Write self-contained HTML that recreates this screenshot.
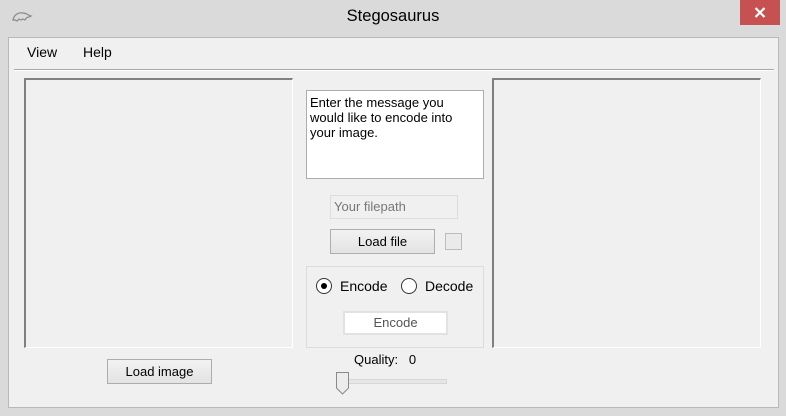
<!DOCTYPE html>
<html><head><style>
*{margin:0;padding:0;box-sizing:border-box}
body{width:786px;height:416px;background:#dadada;position:relative;overflow:hidden;font-family:"Liberation Sans",sans-serif;font-size:13px;color:#000}
.a{position:absolute}
.client{left:8px;top:37px;width:771px;height:371px;background:#f0f0f0;border:1px solid #b9b9b9}
.panel{background:#f0f0f0;border-top:2px solid #808080;border-left:2px solid #808080;border-right:1px solid #fff;border-bottom:1px solid #fff}
.btn{background:linear-gradient(#f2f2f2,#e3e3e3);border:1px solid #adadad;text-align:center;font-size:13px}
</style></head><body>
<svg class="a" style="left:11px;top:9px" width="22" height="14" viewBox="0 0 22 14"><path d="M2 11 C3 6 7 3 12 4 C15 4 17 6 20 7 L18 8 C16 8 15 9 14 11 L12 10 L10 11 L8 10 L6 12 L4 11 Z" fill="none" stroke="#888" stroke-width="1.2"/></svg>
<div class="a" style="left:0;width:786px;top:7px;text-align:center;font-size:16.5px;color:#000">Stegosaurus</div>
<div class="a" style="left:740px;top:0;width:40px;height:25px;background:#c75050"></div>
<svg class="a" style="left:754px;top:7px" width="12" height="11" viewBox="0 0 12 11"><path d="M1.5 1 L10.5 10 M10.5 1 L1.5 10" stroke="#fff" stroke-width="2.2"/></svg>
<div class="a client"></div>
<div class="a" style="left:27px;top:44px;font-size:14px">View</div>
<div class="a" style="left:83px;top:44px;font-size:14px">Help</div>
<div class="a" style="left:14px;top:69px;width:760px;height:2px;border-top:1px solid #a8a8a8;border-bottom:1px solid #fff"></div>
<div class="a panel" style="left:24px;top:78px;width:269px;height:270px"></div>
<div class="a panel" style="left:492px;top:78px;width:269px;height:270px"></div>
<div class="a" style="left:306px;top:90px;width:178px;height:89px;background:#fff;border:1px solid #adadad;padding:4px 3px;font-size:13px;line-height:15px">Enter the message you would like to encode into your image.</div>
<div class="a" style="left:330px;top:195px;width:128px;height:24px;border:1px solid #ddd;background:#f0f0f0;color:#777;padding:3px 3px;font-size:13px">Your filepath</div>
<div class="a btn" style="left:330px;top:229px;width:105px;height:25px;line-height:23px">Load file</div>
<div class="a" style="left:445px;top:233px;width:17px;height:17px;border:1px solid #bbb;background:#eaeaea"></div>
<div class="a" style="left:306px;top:266px;width:178px;height:82px;border:1px solid #dcdcdc"></div>
<div class="a" style="left:316px;top:278px;width:16px;height:16px;border-radius:50%;border:1px solid #333;background:#fff"></div>
<div class="a" style="left:321px;top:283px;width:6px;height:6px;border-radius:50%;background:#000"></div>
<div class="a" style="left:340px;top:278px;font-size:14px">Encode</div>
<div class="a" style="left:401px;top:278px;width:16px;height:16px;border-radius:50%;border:1px solid #333;background:#fff"></div>
<div class="a" style="left:425px;top:278px;font-size:14px">Decode</div>
<div class="a" style="left:343px;top:311px;width:105px;height:24px;background:#fff;border:2px solid #e2e2e2;text-align:center;line-height:20px;color:#555">Encode</div>
<div class="a" style="left:354px;top:352px">Quality:&nbsp;&nbsp;&nbsp;0</div>
<div class="a" style="left:337px;top:379px;width:110px;height:5px;background:#e6e6e6;border:1px solid #d6d6d6"></div>
<svg class="a" style="left:335px;top:371px" width="16" height="25" viewBox="0 0 16 25"><path d="M1.5 1.5 H13.5 V17 L7.5 23 L1.5 17 Z" fill="#ececec" stroke="#8a8a8a"/></svg>
<div class="a btn" style="left:107px;top:359px;width:105px;height:25px;line-height:23px">Load image</div>
</body></html>
